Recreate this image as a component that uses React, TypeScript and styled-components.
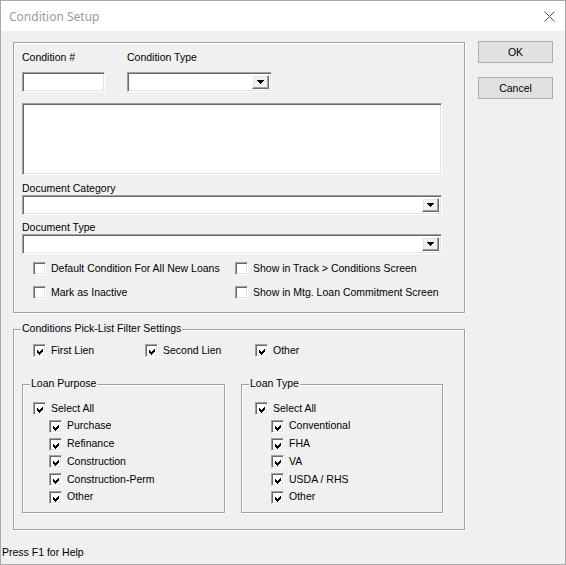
import React from "react";
import styled, { createGlobalStyle, css } from "styled-components";

const GlobalStyle = createGlobalStyle`
  html, body {
    margin: 0;
    padding: 0;
    background: #ffffff;
  }
  body {
    font-family: "Liberation Sans", Arial, sans-serif;
    font-size: 10.5px;
    color: #000000;
  }
`;

const sunken = css`
  box-sizing: border-box;
  background: #ffffff;
  border: 1px solid;
  border-color: #a0a0a0 #ffffff #ffffff #a0a0a0;
  box-shadow: inset 1px 1px 0 #696969, inset -1px -1px 0 #e3e3e3;
`;

const Window = styled.div`
  width: 566px;
  height: 565px;
  box-sizing: border-box;
  border: 1px solid #aaaaaa;
  display: flex;
  flex-direction: column;
  background: #f0f0f0;
`;

const TitleBar = styled.div`
  height: 30px;
  flex: none;
  background: #ffffff;
  display: flex;
  align-items: center;
  justify-content: space-between;
  padding: 0 10px 0 8px;
`;

const Title = styled.span`
  font-family: "Noto Sans", "Open Sans", sans-serif;
  font-size: 12px;
  color: #9a9a9a;
`;

const Client = styled.div`
  flex: 1;
  display: flex;
  flex-direction: column;
`;

const Body = styled.div`
  display: grid;
  grid-template-columns: 452px 75px;
  column-gap: 13px;
  padding: 11px 0 0 12px;
`;

const MainColumn = styled.div`
  display: flex;
  flex-direction: column;
  gap: 16px;
`;

const ButtonColumn = styled.div`
  display: flex;
  flex-direction: column;
  gap: 14px;
  margin-top: -1px;
`;

const Button = styled.button`
  width: 75px;
  height: 22px;
  padding: 0;
  background: #e1e1e1;
  border: 1px solid #adadad;
  font-family: "Liberation Sans", Arial, sans-serif;
  font-size: 10.5px;
  color: #000000;
`;

const Panel = styled.div<{ $h: number; $pt: number; $pl: number }>`
  position: relative;
  box-sizing: border-box;
  height: ${(p) => p.$h}px;
  border: 1px solid #a0a0a0;
  box-shadow: inset 1px 1px 0 #ffffff, 1px 1px 0 #ffffff;
  padding: ${(p) => p.$pt}px 0 0 ${(p) => p.$pl}px;
`;

const Caption = styled.span`
  position: absolute;
  top: -8px;
  left: 7px;
  padding: 0 1px;
  line-height: 13px;
  background: #f0f0f0;
  white-space: nowrap;
`;

const FieldGrid = styled.div`
  display: grid;
  grid-template-columns: 83px 145px;
  column-gap: 22px;
  row-gap: 8px;
`;

const FieldLabel = styled.div<{ $mt?: number }>`
  line-height: 13px;
  margin-top: ${(p) => p.$mt ?? 0}px;
`;

const TextBox = styled.div<{ $w: number; $h: number; $mt?: number }>`
  ${sunken};
  width: ${(p) => p.$w}px;
  height: ${(p) => p.$h}px;
  margin-top: ${(p) => p.$mt ?? 0}px;
`;

const ComboBox = styled.div<{ $w: number }>`
  ${sunken};
  width: ${(p) => p.$w}px;
  height: 20px;
  display: flex;
  justify-content: flex-end;
  padding: 2px;
`;

const DropButton = styled.div`
  box-sizing: border-box;
  width: 17px;
  height: 100%;
  background: #f0f0f0;
  border: 1px solid;
  border-color: #ffffff #696969 #696969 #ffffff;
  box-shadow: inset -1px -1px 0 #a0a0a0, inset 1px 1px 0 #e3e3e3;
  display: flex;
  align-items: center;
  justify-content: center;
`;

const OptionGrid = styled.div`
  display: grid;
  grid-template-columns: 202px auto;
  row-gap: 11px;
  margin: 8px 0 0 11px;
`;

const LienRow = styled.div`
  display: grid;
  grid-template-columns: 112px 110px auto;
  margin-left: 11px;
`;

const SubGroups = styled.div`
  display: grid;
  grid-template-columns: 203px 202px;
  column-gap: 16px;
  margin-top: 27px;
`;

const CheckList = styled.div`
  display: flex;
  flex-direction: column;
  gap: 4.8px;
`;

const CheckRow = styled.label<{ $indent?: number }>`
  display: flex;
  align-items: center;
  gap: 5px;
  height: 13px;
  margin-left: ${(p) => p.$indent ?? 0}px;
  white-space: nowrap;
`;

const Box = styled.span`
  ${sunken};
  width: 13px;
  height: 13px;
  flex: none;
  display: block;
`;

const CheckText = styled.span`
  line-height: 13px;
  margin-top: -1px;
`;

const StatusBar = styled.div`
  margin-top: auto;
  padding: 0 0 5px 1px;
  line-height: 13px;
`;

const Check = ({ label, checked, indent }: { label: string; checked?: boolean; indent?: number }) => (
  <CheckRow $indent={indent}>
    <Box>
      {checked && (
        <svg width="13" height="13" viewBox="0 0 13 13" shapeRendering="crispEdges" style={{ display: "block" }}>
          <path d="M3 5 L5 7 L9 3 L9 6 L5 10 L3 8 Z" fill="#000" />
        </svg>
      )}
    </Box>
    <CheckText>{label}</CheckText>
  </CheckRow>
);

const Combo = ({ w }: { w: number }) => (
  <ComboBox $w={w}>
    <DropButton>
      <svg width="7" height="4" viewBox="0 0 7 4" shapeRendering="crispEdges">
        <path d="M0 0 H7 L3.5 4 Z" fill="#000" />
      </svg>
    </DropButton>
  </ComboBox>
);

const purposes = ["Purchase", "Refinance", "Construction", "Construction-Perm", "Other"];
const loanTypes = ["Conventional", "FHA", "VA", "USDA / RHS", "Other"];

export default function App() {
  return (
    <>
      <GlobalStyle />
      <Window>
        <TitleBar>
          <Title>Condition Setup</Title>
          <svg width="11" height="11" viewBox="0 0 11 11">
            <path d="M0.5 0.5 L10.5 10.5 M10.5 0.5 L0.5 10.5" stroke="#555" strokeWidth="1" />
          </svg>
        </TitleBar>
        <Client>
          <Body>
            <MainColumn>
              <Panel $h={271} $pt={8} $pl={8}>
                <FieldGrid>
                  <FieldLabel>Condition #</FieldLabel>
                  <FieldLabel>Condition Type</FieldLabel>
                  <TextBox $w={83} $h={20} />
                  <Combo w={145} />
                </FieldGrid>
                <TextBox $w={420} $h={72} $mt={11} />
                <FieldLabel $mt={7}>Document Category</FieldLabel>
                <Combo w={420} />
                <FieldLabel $mt={6}>Document Type</FieldLabel>
                <Combo w={420} />
                <OptionGrid>
                  <Check label="Default Condition For All New Loans" />
                  <Check label="Show in Track > Conditions Screen" />
                  <Check label="Mark as Inactive" />
                  <Check label="Show in Mtg. Loan Commitment Screen" />
                </OptionGrid>
              </Panel>

              <Panel $h={201} $pt={14} $pl={8}>
                <Caption>Conditions Pick-List Filter Settings</Caption>
                <LienRow>
                  <Check label="First Lien" checked />
                  <Check label="Second Lien" checked />
                  <Check label="Other" checked />
                </LienRow>
                <SubGroups>
                  <Panel $h={129} $pt={17} $pl={10}>
                    <Caption>Loan Purpose</Caption>
                    <CheckList>
                      <Check label="Select All" checked />
                      {purposes.map((p) => (
                        <Check key={p} label={p} checked indent={16} />
                      ))}
                    </CheckList>
                  </Panel>
                  <Panel $h={129} $pt={17} $pl={13}>
                    <Caption>Loan Type</Caption>
                    <CheckList>
                      <Check label="Select All" checked />
                      {loanTypes.map((t) => (
                        <Check key={t} label={t} checked indent={16} />
                      ))}
                    </CheckList>
                  </Panel>
                </SubGroups>
              </Panel>
            </MainColumn>

            <ButtonColumn>
              <Button>OK</Button>
              <Button>Cancel</Button>
            </ButtonColumn>
          </Body>
          <StatusBar>Press F1 for Help</StatusBar>
        </Client>
      </Window>
    </>
  );
}
